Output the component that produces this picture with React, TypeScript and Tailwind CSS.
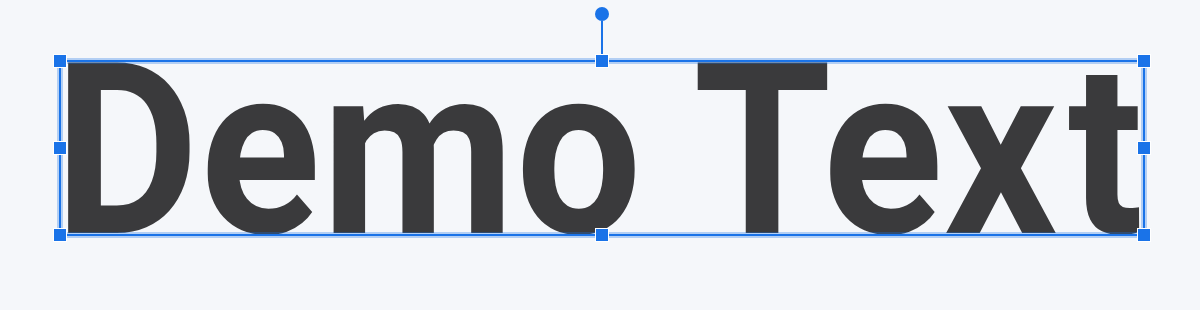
import React from "react";

const Handle = () => <div className="w-[14px] h-[14px] bg-[#1a73e8] border border-white" />;

export default function App() {
  return (
    <div className="w-[1200px] h-[310px] bg-[#f5f7fa] pt-[61px] pl-[60px] overflow-hidden">
      <div className="relative w-[1084px] h-[174px]">
        <div className="absolute inset-0 overflow-hidden">
          <div
            className="absolute left-[-6px] top-[-30px] origin-left scale-x-[0.93] whitespace-nowrap text-[240px] leading-[240px] font-bold text-[#3a3a3c] tracking-[1px]"
            style={{ fontFamily: "Roboto, 'Liberation Sans', sans-serif" }}
          >
            Demo Tex<span className="ml-[10px]">t</span>
          </div>
        </div>
        <div className="absolute inset-[-1px] border-2 border-[#1a73e8] shadow-[0_0_0_2px_rgba(26,115,232,0.3),inset_0_0_0_2px_rgba(26,115,232,0.3)] pointer-events-none" />
        <div className="absolute bottom-full left-1/2 -translate-x-1/2 mb-[6px] flex flex-col items-center">
          <div className="w-[14px] h-[14px] rounded-full bg-[#1a73e8]" />
          <div className="w-[2px] h-[34px] bg-[#1a73e8]" />
        </div>
        <div className="absolute inset-[-7px] flex flex-col justify-between pointer-events-none">
          <div className="flex justify-between">
            <Handle />
            <Handle />
            <Handle />
          </div>
          <div className="flex justify-between">
            <Handle />
            <Handle />
          </div>
          <div className="flex justify-between">
            <Handle />
            <Handle />
            <Handle />
          </div>
        </div>
      </div>
    </div>
  );
}
